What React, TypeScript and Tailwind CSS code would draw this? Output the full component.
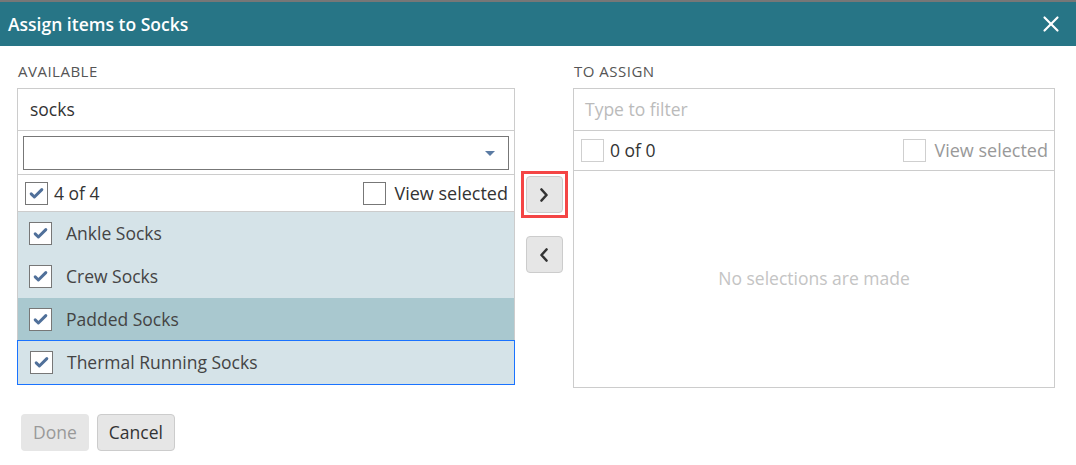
import { X } from "lucide-react";

const ITEMS = [
  { name: "Ankle Socks", bg: "bg-[#d5e3e8]", focus: false },
  { name: "Crew Socks", bg: "bg-[#d5e3e8]", focus: false },
  { name: "Padded Socks", bg: "bg-[#a9c8cf]", focus: false },
  { name: "Thermal Running Socks", bg: "bg-[#d5e3e8]", focus: true },
];

function Check({ checked, light }: { checked?: boolean; light?: boolean }) {
  return (
    <span
      className={`flex h-[23px] w-[23px] shrink-0 items-center justify-center border bg-white ${
        light ? "border-[#cfcfcf]" : "border-[#777]"
      }`}
    >
      {checked && (
        <svg className="h-[17px] w-[17px]" viewBox="0 0 24 24" fill="none">
          <path d="M4.5 12.5l4.5 4.5L19.5 6.5" stroke="#50709a" strokeWidth={4.2} strokeLinecap="round" strokeLinejoin="round" />
        </svg>
      )}
    </span>
  );
}

function Chevron({ left }: { left?: boolean }) {
  return (
    <svg className="h-[14px] w-[10px]" viewBox="0 0 10 14" fill="none">
      <path
        d={left ? "M7.5 1.5L2.5 7l5 5.5" : "M2.5 1.5L7.5 7l-5 5.5"}
        stroke="#333"
        strokeWidth={2.6}
        strokeLinecap="round"
        strokeLinejoin="round"
      />
    </svg>
  );
}

export default function App() {
  return (
    <div className="h-[465px] w-[1076px] overflow-hidden bg-white font-['Open_Sans',sans-serif] text-[#333]">
      <div className="h-[2px] bg-[#777]" />
      {/* Header */}
      <div className="flex h-[44px] items-center justify-between bg-[#277586] pl-[8px] pr-[12px]">
        <h1 className="text-[17.5px] font-semibold text-white">Assign items to Socks</h1>
        <X className="h-[26px] w-[26px] text-white" strokeWidth={2} />
      </div>

      <div className="flex px-[17px] pt-[15px]">
        {/* Available */}
        <div className="w-[498px]">
          <div className="mb-[7px] pl-px text-[15px] leading-[20px] tracking-[0.5px] text-[#555]">AVAILABLE</div>
          <div className="border border-[#ccc]">
            <div className="flex h-[42px] items-center border-b border-[#ccc] px-[12px] text-[17.5px] text-[#333]">
              socks
            </div>
            <div className="border-b border-[#ccc] p-[5px] pb-[4px]">
              <div className="flex h-[34px] items-center justify-end border border-[#777] pr-[13px]">
                <svg className="h-[5px] w-[10px]" viewBox="0 0 10 5">
                  <path d="M0 0h10L5 5z" fill="#5a7ba3" />
                </svg>
              </div>
            </div>
            <div className="flex h-[37px] items-center justify-between border-b border-[#ccc] pl-[7px] pr-[6px]">
              <div className="flex items-center gap-[6px] text-[17.5px]">
                <Check checked />
                <span>4 of 4</span>
              </div>
              <div className="flex items-center gap-[8px] text-[18px]">
                <Check />
                <span>View selected</span>
              </div>
            </div>
            {ITEMS.map((it) => (
              <div
                key={it.name}
                className={`flex h-[43px] items-center gap-[14px] pl-[11px] text-[17.5px] text-[#444] ${it.bg} ${
                  it.focus ? "-m-px h-[45px] border border-[#1a73ff] pl-[12px]" : ""
                }`}
              >
                <Check checked />
                <span>{it.name}</span>
              </div>
            ))}
          </div>
        </div>

        {/* Move buttons */}
        <div className="flex w-[58px] flex-col items-center pt-[110px]">
          <div className="border-[3px] border-[#f44545] p-[2px]">
            <button className="flex h-[37px] w-[37px] items-center justify-center rounded-[4px] border border-[#ccc] bg-[#e6e6e6]">
              <Chevron />
            </button>
          </div>
          <button className="mt-[18px] flex h-[37px] w-[37px] items-center justify-center rounded-[4px] border border-[#ccc] bg-[#e6e6e6]">
            <Chevron left />
          </button>
        </div>

        {/* To assign */}
        <div className="w-[482px]">
          <div className="mb-[7px] pl-px text-[15px] leading-[20px] tracking-[0.5px] text-[#555]">TO ASSIGN</div>
          <div className="flex h-[300px] flex-col border border-[#ccc]">
            <div className="flex h-[42px] items-center border-b border-[#ccc] px-[11px] text-[17.5px] text-[#bbb]">
              Type to filter
            </div>
            <div className="flex h-[40px] items-center justify-between border-b border-[#ccc] pl-[7px] pr-[6px]">
              <div className="flex items-center gap-[6px] text-[17.5px]">
                <Check light />
                <span>0 of 0</span>
              </div>
              <div className="flex items-center gap-[8px] text-[18px] text-[#999]">
                <Check light />
                <span>View selected</span>
              </div>
            </div>
            <div className="flex flex-1 items-center justify-center pb-[2px] text-[17.5px] text-[#c4c4c4]">
              No selections are made
            </div>
          </div>
        </div>
      </div>

      {/* Footer */}
      <div className="flex gap-[8px] pl-[21px] pt-[26px]">
        <button className="h-[37px] rounded-[4px] bg-[#e6e6e6] px-[12px] text-[17.5px] text-[#999]">Done</button>
        <button className="h-[37px] rounded-[4px] border border-[#ccc] bg-[#e6e6e6] px-[11px] text-[17.5px] text-[#333]">
          Cancel
        </button>
      </div>
    </div>
  );
}
